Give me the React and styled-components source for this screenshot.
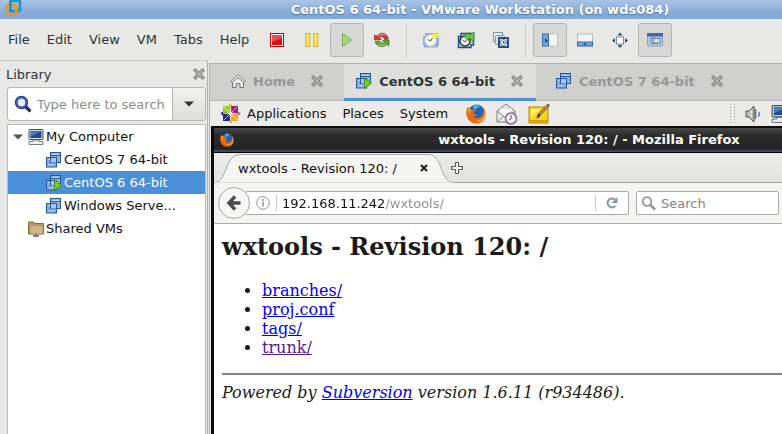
import React from "react";
import styled, { createGlobalStyle, css } from "styled-components";

const Global = createGlobalStyle`
  * { box-sizing: border-box; }
  body { margin: 0; background: #e8e8e6; }
  body, button, input { font-family: "DejaVu Sans", sans-serif; font-size: 13px; color: #2e3436; }
  button { border: 0; background: none; padding: 0; margin: 0; }
  svg { display: block; flex: none; }
`;

const Shell = styled.div`
  display: flex;
  flex-direction: column;
  height: 100vh;
  overflow: hidden;
`;
const TitleBar = styled.header`
  position: relative;
  flex: none;
  height: 19px;
  background: linear-gradient(#a9c3e6, #86a9d8 70%, #85a8d7);
  display: flex;
  justify-content: center;
  overflow: hidden;
  padding-left: 178px;
`;
const AppLogo = styled.div`
  position: absolute;
  left: 5px;
  top: 0;
`;
const WindowTitle = styled.h1`
  margin: 0;
  font-size: 13px;
  line-height: 19px;
  color: #fff;
  text-shadow: 0 1px 1px #54749f, 0 0 1px #6785b0;
  white-space: nowrap;
`;
const CommandBar = styled.div`
  flex: none;
  display: flex;
  align-items: center;
  height: 41px;
  background: #e8e8e6;
`;
const MenuBar = styled.nav`
  display: flex;
  gap: 17px;
  padding-left: 8px;
  width: 260px;
  flex: none;
`;
const Tools = styled.div`
  display: flex;
  align-items: center;
  gap: 1px;
`;
const Tool = styled.button`
  width: 34px;
  height: 34px;
  display: grid;
  place-items: center;
  border-radius: 3px;
  border: 1px solid ${(p) => (p.$pressed ? "#b5b5b2" : "transparent")};
  background: ${(p) => (p.$pressed ? "#d7d7d5" : "transparent")};
`;
const ToolDivider = styled.span`
  width: 1px;
  height: 34px;
  margin: 0 6px;
  background: #cbcbc8;
`;
const Body = styled.div`
  flex: 1;
  min-height: 0;
  display: grid;
  grid-template-columns: 208px minmax(0, 1fr);
`;
const Sidebar = styled.aside`
  display: flex;
  flex-direction: column;
  border-top: 1px solid #c8c8c5;
  border-right: 1px solid #b0b0ad;
  padding: 0 1px 0 7px;
`;
const SidebarHead = styled.div`
  display: flex;
  align-items: center;
  justify-content: space-between;
  height: 26px;
  padding-right: 1px;
  margin-left: -1px;
`;
const SidebarTitle = styled.h2`
  margin: 0;
  font-size: 13px;
  font-weight: 400;
`;
const SearchBox = styled.div`
  display: flex;
  flex: none;
  height: 34px;
  border: 1px solid #b6b6b3;
  border-radius: 3px;
  background: #fff;
  align-items: center;
  gap: 5px;
  padding-left: 6px;
  overflow: hidden;
`;
const LibraryInput = styled.input`
  flex: 1;
  min-width: 0;
  border: 0;
  padding: 0;
  outline: 0;
  background: transparent;
  &::placeholder { color: #8b8e8f; opacity: 1; }
`;
const DropButton = styled.button`
  align-self: stretch;
  width: 33px;
  display: grid;
  place-items: center;
  border-left: 1px solid #b6b6b3;
  background: linear-gradient(#f1f1f0, #dcdcda);
`;
const Tree = styled.ul`
  list-style: none;
  margin: 3px 0 0;
  padding: 0;
  flex: 1;
  background: #fff;
  border: 1px solid #b9b9b6;
  border-bottom: 0;
`;
const TreeRow = styled.button`
  display: flex;
  align-items: center;
  gap: 2px;
  width: 100%;
  height: 23px;
  padding-left: ${(p) => (p.$child ? 38 : 20)}px;
  color: ${(p) => (p.$selected ? "#fff" : "#111")};
  background: ${(p) => (p.$selected ? "#4a90d9" : "transparent")};
  ${(p) => p.$expander && css`padding-left: 5px; & > svg:first-child { margin-right: 3px; }`}
`;
const Workspace = styled.main`
  display: flex;
  flex-direction: column;
  min-width: 0;
  margin: 3px 0 0 1px;
  border-top: 1px solid #b0b0ad;
  border-left: 1px solid #b0b0ad;
`;
const VmTabs = styled.div`
  display: flex;
  flex: none;
  height: 37px;
  background: #cfcfcd;
  box-shadow: inset 0 -1px #b4b4b1;
`;
const VmTab = styled.div`
  display: flex;
  align-items: center;
  flex: none;
  gap: 16px;
  padding: ${(p) => (p.$active ? "0 13px 0 12px" : "0 21px 0 20px")};
  background: ${(p) => (p.$active ? "#dededc" : "transparent")};
  border-bottom: 3px solid ${(p) => (p.$active ? "#4a90d9" : "transparent")};
`;
const TabLabel = styled.button`
  display: flex;
  align-items: center;
  gap: 7px;
  font-weight: 700;
  white-space: nowrap;
  color: ${(p) => (p.$active ? "#2e3436" : "#959896")};
`;
const IconButton = styled.button`
  display: grid;
  place-items: center;
  flex: none;
`;
const GuestPanel = styled.div`
  display: flex;
  flex: none;
  align-items: center;
  height: 25px;
  padding-left: 10px;
  background: #edebe9;
  color: #111;
  overflow: hidden;
`;
const GuestMenu = styled.nav`
  display: flex;
  gap: 16px;
  margin-left: 6px;
`;
const MenuItem = styled.button`
  white-space: nowrap;
  ${(p) => p.$guest && css`color: #111;`}
`;
const Launchers = styled.div`
  display: flex;
  gap: 10px;
  margin-left: 18px;
`;
const Tray = styled.div`
  display: flex;
  align-items: center;
  gap: 10px;
  margin: 0 -7px 0 auto;
`;
const Browser = styled.section`
  flex: 1;
  min-height: 0;
  display: flex;
  flex-direction: column;
  border-left: 3px solid #0a0c12;
  border-top: 2px solid #0c0e0d;
  margin-left: 1px;
  background: #fff;
`;
const BrowserTitle = styled.div`
  flex: none;
  display: grid;
  grid-template-columns: 20px 1fr;
  align-items: center;
  height: 25px;
  padding-left: 6px;
  color: #fff;
  background: linear-gradient(#484848, #2c2c2c 30%, #232323);
  border-bottom: 1px solid #000;
  box-shadow: inset 0 -2px #3c4a66;
`;
const BrowserTitleText = styled.h2`
  margin: 0;
  padding-left: 156px;
  justify-self: center;
  font-size: 13px;
  line-height: 20px;
  white-space: nowrap;
`;
const TabStrip = styled.div`
  display: flex;
  flex: none;
  align-items: center;
  height: 30px;
  background: linear-gradient(#ebebe9, #e2e2e0);
  box-shadow: inset 0 -1px #a5a5a3;
`;
const PageTab = styled.div`
  position: relative;
  width: 236px;
  height: 30px;
  display: flex;
  align-items: center;
  justify-content: space-between;
  padding: 0 22px 0 24px;
`;
const TabShape = styled.svg`
  position: absolute;
  inset: 0;
`;
const PageTabLabel = styled.button`
  position: relative;
  white-space: nowrap;
  color: #111;
`;
const TabClose = styled(IconButton)`
  position: relative;
`;
const NavBar = styled.div`
  display: flex;
  flex: none;
  align-items: center;
  height: 41px;
  padding: 0 3px 0 4px;
  background: #f4f4f2;
  border-bottom: 1px solid #aaaaa8;
`;
const BackButton = styled.button`
  z-index: 1;
  flex: none;
  width: 32px;
  height: 32px;
  display: grid;
  place-items: center;
  border: 1px solid #a7a7a5;
  border-radius: 50%;
  background: #f7f7f6;
`;
const Field = styled.div`
  display: flex;
  align-items: center;
  height: 24px;
  background: #fff;
  border: 1px solid #a9a9a7;
  border-radius: 2px;
  min-width: 0;
`;
const AddressField = styled(Field)`
  flex: 1;
  margin-left: -5px;
  padding: 0 9px 0 10px;
`;
const SearchField = styled(Field)`
  flex: none;
  width: 143px;
  margin-left: 7px;
  padding-left: 4px;
  gap: 5px;
`;
const FieldRule = styled.span`
  flex: none;
  width: 1px;
  height: 16px;
  background: #c4c4c2;
  margin: 0 ${(p) => (p.$wide ? 9 : 5)}px 0 6px;
`;
const UrlInput = styled.input`
  flex: 1;
  min-width: 0;
  border: 0;
  padding: 0;
  outline: 0;
  color: transparent;
  caret-color: #111;
  background: linear-gradient(90deg, #111 103px, #8d8d8d 103px);
  background-clip: text;
  -webkit-background-clip: text;
`;
const SearchInput = styled.input`
  flex: 1;
  min-width: 0;
  border: 0;
  padding: 0;
  outline: 0;
  background: transparent;
  &::placeholder { color: #858585; opacity: 1; }
`;
const Page = styled.article`
  flex: 1;
  min-height: 0;
  padding: 8px 0 0 8px;
  font-family: "DejaVu Serif", serif;
  font-size: 16px;
  line-height: 19px;
  color: #1a1a1a;
  overflow: hidden;
`;
const PageHeading = styled.h1`
  margin: 0;
  font-size: 24px;
  line-height: 30px;
`;
const FileList = styled.ul`
  margin: 19px 0 16px;
  padding-left: 40px;
`;
const PageLink = styled.a`
  color: ${(p) => (p.$visited ? "#551a8b" : "#0000ee")};
`;
const Rule = styled.hr`
  margin: 0 0 8px;
  border: 0;
  height: 2px;
  background: #858585;
`;

const VmIcon = ({ running }) => (
  <svg width="16" height="16" viewBox="0 0 16 16">
    <rect x="4.500" y=".5" width="10" height="10" fill="#8fb4e0" stroke="#27579d" />
    <path d="M6 2.500h7" stroke="#c5daf2" />
    <rect x=".5" y="5.500" width="10" height="9.500" fill="#7eabdf" stroke="#27579d" />
    <rect x="4.500" y="3.500" width="10" height="7" fill="none" stroke="#27579d" />
    <rect x="5" y="6" width="5" height="4.500" fill="#a9caee" />
    <path d="M2 7.500h2M2 13h6" stroke="#b9d3f0" />
    {running && <path d="M8.500 5 15.500 10.300 8.500 15.500z" fill="#73d216" stroke="#4b8d16" />}
  </svg>
);
const CloseIcon = () => (
  <svg width="12" height="12" viewBox="0 0 12 12">
    <path d="M2.500 2.500 9.500 9.500M9.500 2.500 2.500 9.500" stroke="#7d807e" strokeWidth="3.600" strokeLinecap="square" />
    <path d="M2.500 2.500 9.500 9.500M9.500 2.500 2.500 9.500" stroke="#bcbdbb" strokeWidth="1.400" strokeLinecap="square" />
  </svg>
);
const VmwareLogo = () => (
  <svg width="17" height="17" viewBox="0 0 17 17" fill="none" strokeWidth="2.600">
    <rect x="5.300" y="1" width="9.700" height="10" rx="1" stroke="#1497cf" />
    <rect x="1.500" y="5.300" width="9.700" height="9.400" rx="1" stroke="#f59209" />
    <path d="M5.300 3.500V11H9" stroke="#1497cf" />
  </svg>
);
const StopIcon = () => (
  <svg width="16" height="16" viewBox="0 0 16 16">
    <rect x="1.500" y="1.500" width="13" height="13" fill="#fff" stroke="#c10000" />
    <rect x="3" y="3" width="10" height="10" fill="#d90f14" />
    <path d="M3 3h10v3L3 10z" fill="#ea5052" />
  </svg>
);
const PauseIcon = () => (
  <svg width="16" height="16" viewBox="0 0 16 16" fill="#f7dc4c" stroke="#dfb54d">
    <rect x="1.500" y="1.500" width="4.500" height="13" /><rect x="9.500" y="1.500" width="4.500" height="13" />
    <path d="M3 3v6M11 3v6" stroke="#fff0a0" />
  </svg>
);
const PlayIcon = () => (
  <svg width="16" height="16" viewBox="0 0 16 16">
    <path d="M3.500 1.500 12.500 8 3.500 14.500z" fill="#9fdc78" stroke="#76a85f" strokeLinejoin="round" />
  </svg>
);
const ResetIcon = () => (
  <svg width="18" height="18" viewBox="0 0 18 18">
    <path d="M1.500 4 4 5Q9-.5 14 4.500L15.500 8 12 9 10.500 6.500Q8.500 4.500 6.500 6.500L8.500 8.500 1.500 9z" fill="#d5363d" stroke="#a81c24" strokeWidth=".6" />
    <path d="M2 10.500 6.500 10Q9 13.500 11.500 11.500L9.500 9.500 16 9V15L14 13.500Q8.500 18 3.500 13.500z" fill="#4ba62d" stroke="#2c7d1c" strokeWidth=".6" />
    <path d="M5 5.500Q9 1.500 12.500 4.500M5 13Q9 16 13 12.500" fill="none" stroke="#f1c4bd" strokeWidth=".8" />
  </svg>
);
const SnapIcon = ({ kind }) => (
  <svg width="18" height="18" viewBox="0 0 18 18">
    {kind === "manage" && (
      <>
        <rect x="1.500" y="1.500" width="9" height="9" fill="#e6e9ec" stroke="#8297ac" />
        <rect x="3.500" y="4.500" width="9" height="9" rx="1" fill="#dae0e7" stroke="#8297ac" />
        <rect x="7" y="7" width="9" height="9" fill="#fff" stroke="#214f93" strokeWidth="2" />
        <circle cx="11.500" cy="11.500" r="3" fill="#fff" stroke="#4d6486" />
        <path d="M11.500 10v2l2-1" fill="none" stroke="#26406d" />
      </>
    )}
    {kind === "take" && (
      <>
        <path d="M1 5h2V2h13v3h1v10h-1v1.500H2V14H1z" fill="#8eb0dc" />
        <circle cx="8.500" cy="9.500" r="5.800" fill="#f5f5f0" stroke="#c3c9cf" />
        <path d="M8.500 10 10.500 7M8.500 10 6 8.500" stroke="#45505c" />
        <path d="m13.500 1 1 2 2.500-.5-1 2.500 1 2-2.500-.5-1 2-1-2-2.500.5 1-2-1-2.500 2.500.5z" fill="#ffee24" />
      </>
    )}
    {kind === "revert" && (
      <>
        <path d="M1.500 5.500H4v-3h12.500V14H14v2.500H1.500z" fill="#b5cae5" stroke="#1f4b8c" strokeWidth="1.400" />
        <circle cx="8" cy="10" r="5" fill="#f5f5f0" stroke="#202d3c" strokeWidth="1.400" />
        <path d="M8 11 10.500 8M8 11 5.500 9" stroke="#45505c" />
        <path d="M7 5.500 12 1.500v2.500l5-2.500v9L12 7v3z" fill="#6cc644" stroke="#2a8521" strokeWidth=".8" />
      </>
    )}
  </svg>
);
const LayoutIcon = ({ kind }) => (
  <svg width="18" height="18" viewBox="0 0 18 18">
    {kind === "side" && <>
      <rect x="1.500" y="3" width="15" height="12" fill="#f4f4f2" stroke="#c0c3c3" />
      <rect x="1.500" y="3" width="6" height="12" fill="#75a8df" stroke="#3668a8" />
      <path d="M4 7v5l3-2.500z" fill="#174582" />
    </>}
    {kind === "bottom" && <>
      <rect x="1.500" y="3" width="15" height="12" fill="#f4f4f2" stroke="#b5b9ba" />
      <rect x="1.500" y="11" width="15" height="4" fill="#74a6dd" stroke="#3668a8" />
      <path d="M7 14h4l-2-2z" fill="#174582" />
    </>}
    {kind === "full" && <>
      <rect x="5.500" y="6" width="7" height="7" fill="#fff" stroke="#858b8c" />
      <path d="m9 1.500 2.500 3h-5zM9 17l2.500-3h-5zM1 9.500 4 7v5zM17 9.500 14 7v5z" fill="#244d8b" />
    </>}
    {kind === "unity" && <>
      <rect x="1.500" y="2.500" width="15" height="12.500" rx="1" fill="#a9c7e6" stroke="#80a5cd" />
      <path d="M1 2h16v3.500H1z" fill="#386ba9" />
      <rect x="7.500" y="7.500" width="6.500" height="4.500" fill="#d9e5f1" stroke="#6e86a3" />
      <path d="M5 11.500V7h5M5 12.500h7" fill="none" stroke="#647f9f" />
    </>}
  </svg>
);
const Magnifier = () => (
  <svg width="18" height="18" viewBox="0 0 18 18" fill="none">
    <path d="m12 12 3.500 3.500" stroke="#26324d" strokeWidth="3.200" strokeLinecap="round" />
    <circle cx="7.500" cy="7.500" r="5.300" fill="#e7edfa" stroke="#1b358a" strokeWidth="2.800" />
    <circle cx="7.500" cy="7.500" r="5.300" stroke="#5574c8" />
  </svg>
);
const DownArrow = ({ fill = "#2e3436" }) => (
  <svg width="10" height="6" viewBox="0 0 10 6"><path d="M0 .5h10L5 5.500z" fill={fill} /></svg>
);
const ComputerIcon = ({ size = 16 }) => (
  <svg width={size} height={size} viewBox="0 0 16 16">
    <rect x="1" y=".5" width="14" height="10" rx="1" fill="#dfe2df" stroke="#454a4d" />
    <rect x="2.500" y="2" width="11" height="7" fill="#1d4d91" />
    <path d="M3 2.500h10L3 7z" fill="#4d81c0" />
    <path d="M5 11h6v1.500h4v3H1v-3h4z" fill="#ecefeb" stroke="#5f6466" strokeWidth=".8" />
  </svg>
);
const FolderIcon = () => (
  <svg width="16" height="16" viewBox="0 0 16 16">
    <path d="M.5 2V1h5l1 1.500h9V13H.5z" fill="#b89b69" stroke="#80683f" />
    <path d="M2 4.500h13V13H2z" fill="#cdb68a" stroke="#9b8154" strokeWidth=".6" />
    <path d="M5 15h6M7 14h2" stroke="#5d666d" strokeWidth="1.500" />
  </svg>
);
const HomeIcon = () => (
  <svg width="16" height="16" viewBox="0 0 16 16" fill="#f2f2f0" stroke="#70736f">
    <path d="M2.500 8v6.500h3.500v-4h4v4h3.500V8L8 4z" />
    <path d="M1 8.500 8 1.500l7 7-1.500 1L8 4.500l-5.500 5z" />
  </svg>
);
const CentosIcon = () => (
  <svg width="21" height="21" viewBox="0 0 21 21">
    <path d="m10.500.5 3 3.500-3 4-3-4z" fill="#efa724" /><path d="m20.500 10.500-3.500 3-4-3 4-3z" fill="#a14f8d" />
    <path d="m10.500 20.500-3-3.500 3-4 3 4z" fill="#9ccd2a" /><path d="m.5 10.500 3.500-3 4 3-4 3z" fill="#262577" />
    <path d="M3 3h6.800v6.800H3z" fill="#9ccd2a" /><path d="M11.200 3H18v6.800h-6.800z" fill="#932279" />
    <path d="M3 11.200h6.800V18H3z" fill="#262577" /><path d="M11.200 11.200H18V18h-6.800z" fill="#efa724" />
    <path d="m4 4 13 13M17 4 4 17M10.500 3v15M3 10.500h15" stroke="#f2eff0" strokeWidth=".7" />
  </svg>
);
const FirefoxIcon = ({ size = 20 }) => (
  <svg width={size} height={size} viewBox="0 0 20 20">
    <circle cx="10.500" cy="9" r="8.500" fill="#1e65b2" />
    <path d="M7 2q4-2.500 8 1-3-1-4 1l-3 2z" fill="#52b8e7" />
    <path d="M2 2.500Q-.5 6 .5 11 2 19 10 19.500q8 0 9.500-8Q20 7 17.500 4q.5 3-.5 5-1 5-6 5-3 0-4-2 3 1 4.500-1Q8 10.500 7.500 8L10 7Q8 5 5 5.500 3 4.500 2 2.500z" fill="#ec6811" />
    <path d="M18 5q1.500 5-1 8.500-3 4-8 3 5 2.500 9-2Q20 10 18 5z" fill="#fdbd29" />
    <path d="M2 3q-1 5 1.500 8-.5-3 2-5Q3 5 2 3z" fill="#f99b1c" />
  </svg>
);
const MailIcon = () => (
  <svg width="22" height="22" viewBox="0 0 22 22">
    <path d="M1 8 10 1l9 7v11H1z" fill="#eeeeec" stroke="#777a78" />
    <path d="M4 5h12v6l-6 4-6-4z" fill="#fff" stroke="#b6b8b5" strokeWidth=".7" />
    <path d="m1 8 9 7 9-7M1 19l7-6" fill="none" stroke="#898c89" />
    <circle cx="15" cy="15.500" r="5.500" fill="#f5eef5" stroke="#8a6c93" strokeWidth="1.500" />
    <path d="M15 12v4l-2 1" fill="none" stroke="#66566c" />
  </svg>
);
const NoteIcon = () => (
  <svg width="22" height="20" viewBox="0 0 22 20">
    <path d="M1 3h19v16H1z" fill="#f6d71c" stroke="#ae8500" />
    <path d="M1.500 16h18v2.500h-18z" fill="#e39a13" /><path d="M3 5h10L3 13z" fill="#fff17c" />
    <path d="m11 11 9-9.500" stroke="#5f4526" strokeWidth="3" strokeLinecap="round" />
    <path d="m12 10 8-8.500" stroke="#d0a06a" strokeWidth="1.600" /><path d="m8 14.500 2-3.500 2 2z" fill="#3d3427" />
  </svg>
);
const TrayHandle = () => (
  <svg width="5" height="19" viewBox="0 0 5 19"><path d="M.5 0v19M4.500 0v19" stroke="#999" strokeDasharray="1 2" /></svg>
);
const SpeakerIcon = () => (
  <svg width="16" height="18" viewBox="0 0 16 18">
    <path d="M1 6h3l5-5v16l-5-5H1z" fill="#b9bcb8" stroke="#4d524f" /><path d="M6 5v8" stroke="#f4f4f2" />
    <path d="M10.500 4v10" stroke="#666b68" strokeWidth="1.500" /><path d="M13 7q3 2 0 4.500" fill="none" stroke="#4b76b7" strokeWidth="1.300" />
  </svg>
);
const BackIcon = () => (
  <svg width="16" height="16" viewBox="0 0 16 16" fill="none" stroke="#4c4c4c" strokeWidth="3.400"><path d="M14.500 8H3M9 1.500 3 8l6 6.500" /></svg>
);
const InfoIcon = () => (
  <svg width="14" height="14" viewBox="0 0 14 14" fill="none" stroke="#929292"><circle cx="7" cy="7" r="6.300" /><path d="M7 6v4.500M7 3v2" strokeWidth="1.600" /></svg>
);
const ReloadIcon = () => (
  <svg width="14" height="14" viewBox="0 0 14 14"><path d="M10.500 9.800A4.500 4.500 0 1 1 10 3.500" fill="none" stroke="#8497aa" strokeWidth="2" /><path d="M12.500 1v6h-6z" fill="#8497aa" /></svg>
);
const GlassIcon = () => (
  <svg width="15" height="15" viewBox="0 0 15 15" fill="none" stroke="#959595"><circle cx="6" cy="5.500" r="4.300" strokeWidth="1.700" /><path d="m9 8.500 5 5" strokeWidth="2.500" /></svg>
);

const menus = ["File", "Edit", "View", "VM", "Tabs", "Help"];
const tools = [
  { label: "Power off", icon: <StopIcon /> },
  { label: "Suspend", icon: <PauseIcon /> },
  { label: "Power on", icon: <PlayIcon />, pressed: true },
  { label: "Restart", icon: <ResetIcon /> },
  null,
  { label: "Take snapshot", icon: <SnapIcon kind="take" /> },
  { label: "Revert snapshot", icon: <SnapIcon kind="revert" /> },
  { label: "Manage snapshots", icon: <SnapIcon kind="manage" /> },
  null,
  { label: "Show library", icon: <LayoutIcon kind="side" />, pressed: true },
  { label: "Show thumbnails", icon: <LayoutIcon kind="bottom" /> },
  { label: "Full screen", icon: <LayoutIcon kind="full" /> },
  { label: "Unity", icon: <LayoutIcon kind="unity" />, pressed: true },
];
const tabs = [
  { name: "Home", icon: <HomeIcon /> },
  { name: "CentOS 6 64-bit", icon: <VmIcon running />, active: true },
  { name: "CentOS 7 64-bit", icon: <VmIcon /> },
];
const machines = [
  { name: "CentOS 7 64-bit" },
  { name: "CentOS 6 64-bit", running: true },
  { name: "Windows Serve..." },
];
const files = ["branches/", "proj.conf", "tags/", "trunk/"];

export default function App() {
  return (
    <Shell>
      <Global />
      <TitleBar>
        <AppLogo><VmwareLogo /></AppLogo>
        <WindowTitle>CentOS 6 64-bit - VMware Workstation (on wds084)</WindowTitle>
      </TitleBar>
      <CommandBar>
        <MenuBar>{menus.map((m) => <MenuItem key={m}>{m}</MenuItem>)}</MenuBar>
        <Tools>
          {tools.map((t, i) => t
            ? <Tool key={i} aria-label={t.label} $pressed={t.pressed}>{t.icon}</Tool>
            : <ToolDivider key={i} />)}
        </Tools>
      </CommandBar>
      <Body>
        <Sidebar>
          <SidebarHead>
            <SidebarTitle>Library</SidebarTitle>
            <IconButton aria-label="Close library"><CloseIcon /></IconButton>
          </SidebarHead>
          <SearchBox>
            <Magnifier />
            <LibraryInput aria-label="Search library" placeholder="Type here to search" />
            <DropButton aria-label="Search options"><DownArrow /></DropButton>
          </SearchBox>
          <Tree>
            <li><TreeRow $expander><DownArrow fill="#555" /><ComputerIcon />My Computer</TreeRow></li>
            {machines.map((m) => (
              <li key={m.name}>
                <TreeRow $child $selected={m.running}><VmIcon running={m.running} />{m.name}</TreeRow>
              </li>
            ))}
            <li><TreeRow><FolderIcon />Shared VMs</TreeRow></li>
          </Tree>
        </Sidebar>
        <Workspace>
          <VmTabs>
            {tabs.map((t) => (
              <VmTab key={t.name} $active={t.active}>
                <TabLabel $active={t.active}>{t.icon}{t.name}</TabLabel>
                <IconButton aria-label={`Close ${t.name}`}><CloseIcon /></IconButton>
              </VmTab>
            ))}
          </VmTabs>
          <GuestPanel>
            <CentosIcon />
            <GuestMenu>
              {["Applications", "Places", "System"].map((m) => <MenuItem $guest key={m}>{m}</MenuItem>)}
            </GuestMenu>
            <Launchers>
              <IconButton aria-label="Firefox"><FirefoxIcon /></IconButton>
              <IconButton aria-label="Mail"><MailIcon /></IconButton>
              <IconButton aria-label="Notes"><NoteIcon /></IconButton>
            </Launchers>
            <Tray>
              <TrayHandle />
              <SpeakerIcon />
              <ComputerIcon size={18} />
            </Tray>
          </GuestPanel>
          <Browser>
            <BrowserTitle>
              <FirefoxIcon size={14} />
              <BrowserTitleText>wxtools - Revision 120: / - Mozilla Firefox</BrowserTitleText>
            </BrowserTitle>
            <TabStrip>
              <PageTab>
                <TabShape width="240" height="30" viewBox="0 0 240 30">
                  <path d="M0 29.500C14 29.500 10 1.500 26 1.500H214C230 1.500 225 29.500 240 29.500" fill="#f4f4f2" stroke="#a9a9ad" />
                  <path d="M1 30h238" stroke="#f4f4f2" strokeWidth="1" />
                </TabShape>
                <PageTabLabel>wxtools - Revision 120: /</PageTabLabel>
                <TabClose aria-label="Close page">
                  <svg width="8" height="8" viewBox="0 0 8 8"><path d="m1 1 6 6M7 1 1 7" stroke="#222" strokeWidth="2.200" /></svg>
                </TabClose>
              </PageTab>
              <IconButton aria-label="New tab">
                <svg width="14" height="14" viewBox="0 0 14 14"><path d="M5.500 1.500h3v4h4v3h-4v4h-3v-4h-4v-3h4z" fill="#f0f0ee" stroke="#555" /></svg>
              </IconButton>
            </TabStrip>
            <NavBar>
              <BackButton aria-label="Back"><BackIcon /></BackButton>
              <AddressField>
                <InfoIcon />
                <FieldRule />
                <UrlInput aria-label="Address" defaultValue="192.168.11.242/wxtools/" />
                <FieldRule $wide />
                <IconButton aria-label="Reload"><ReloadIcon /></IconButton>
              </AddressField>
              <SearchField>
                <GlassIcon />
                <SearchInput aria-label="Web search" placeholder="Search" />
              </SearchField>
            </NavBar>
            <Page>
              <PageHeading>wxtools - Revision 120: /</PageHeading>
              <FileList>
                {files.map((f) => (
                  <li key={f}><PageLink href={`#${f}`} $visited={f === "trunk/"}>{f}</PageLink></li>
                ))}
              </FileList>
              <Rule />
              <em>Powered by <PageLink href="#subversion">Subversion</PageLink> version 1.6.11 (r934486).</em>
            </Page>
          </Browser>
        </Workspace>
      </Body>
    </Shell>
  );
}
